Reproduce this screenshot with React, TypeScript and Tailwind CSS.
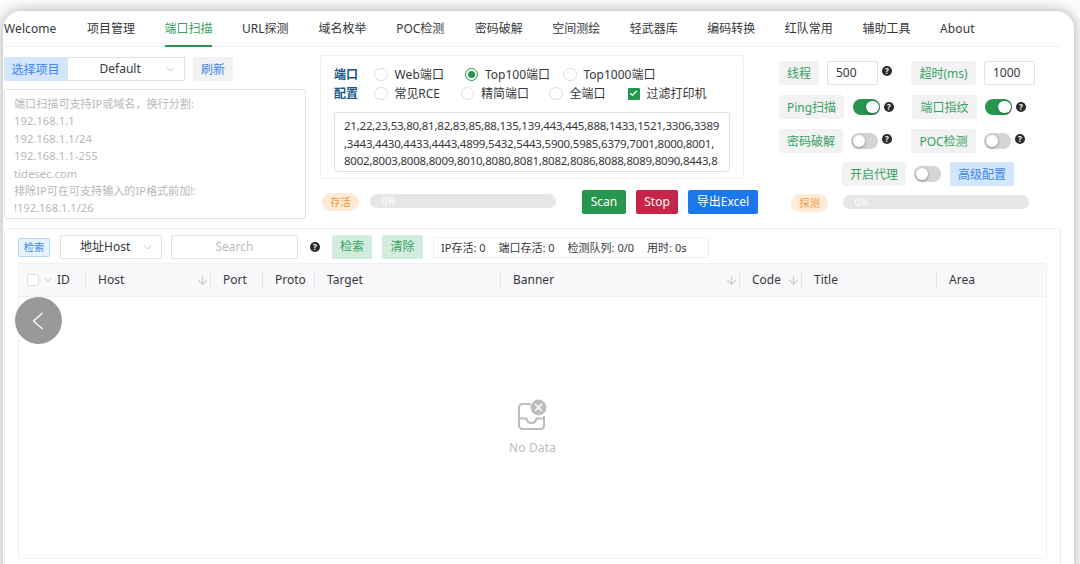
import type { ReactNode } from "react";
import clsx from "clsx";
import { ArrowDown, Check, ChevronDown } from "lucide-react";

const tabs = [
  { label: "Welcome", className: "w-[53px] tracking-[0.1px]" },
  { label: "项目管理", className: "w-[47.55px]" },
  { label: "端口扫描", className: "w-[47.55px]", active: true },
  { label: "URL探测", className: "w-[46.5px]" },
  { label: "域名枚举", className: "w-[47.55px]" },
  { label: "POC检测", className: "w-[48.5px]" },
  { label: "密码破解", className: "w-[47.55px]" },
  { label: "空间测绘", className: "w-[47.55px]" },
  { label: "轻武器库", className: "w-[47.55px]" },
  { label: "编码转换", className: "w-[47.55px]" },
  { label: "红队常用", className: "w-[47.55px]" },
  { label: "辅助工具", className: "w-[47.55px]" },
  { label: "About", className: "w-[36px] tracking-[0.15px]" },
];

const columns = [
  { label: "Host", className: "w-[125px]", sortable: true },
  { label: "Port", className: "w-[52px]" },
  { label: "Proto", className: "w-[52px]" },
  { label: "Target", className: "w-[186px]" },
  { label: "Banner", className: "w-[239px]", sortable: true },
  { label: "Code", className: "w-[62px]", sortable: true },
  { label: "Title", className: "w-[135px]" },
  { label: "Area", className: "flex-1", last: true },
];

const targetHint = [
  "端口扫描可支持IP或域名，换行分割:",
  "192.168.1.1",
  "192.168.1.1/24",
  "192.168.1.1-255",
  "tidesec.com",
  "排除IP可在可支持输入的IP格式前加!:",
  "!192.168.1.1/26",
];

const portLines = [
  "21,22,23,53,80,81,82,83,85,88,135,139,443,445,888,1433,1521,3306,3389",
  ",3443,4430,4433,4443,4899,5432,5443,5900,5985,6379,7001,8000,8001,",
  "8002,8003,8008,8009,8010,8080,8081,8082,8086,8088,8089,8090,8443,8",
];

function Help({ className }: { className?: string }) {
  return (
    <span
      className={clsx(
        "flex size-[10px] shrink-0 items-center justify-center rounded-full bg-[#2b2b2f] text-[8px] leading-none font-bold text-white",
        className,
      )}
    >
      ?
    </span>
  );
}

function Label({ className, children }: { className?: string; children: ReactNode }) {
  return (
    <span
      className={clsx(
        "flex h-[23.5px] shrink-0 items-center justify-center rounded-[2px] bg-[#f2f2f3] pt-px text-[#36a064]",
        className,
      )}
    >
      {children}
    </span>
  );
}

function Switch({ on, className }: { on?: boolean; className?: string }) {
  return (
    <span
      className={clsx(
        "flex h-[15.5px] w-[27px] shrink-0 items-center rounded-full px-[1.5px]",
        on ? "justify-end bg-[#27964f]" : "bg-[#d4d4d4]",
        className,
      )}
    >
      <span className="size-[12.5px] rounded-full bg-white shadow-[0_1px_3px_rgba(0,0,0,0.35)]" />
    </span>
  );
}

function Radio({ label, checked, className }: { label: string; checked?: boolean; className?: string }) {
  return (
    <span className={clsx("flex shrink-0 items-center gap-[7px]", className)}>
      <span
        className={clsx(
          "flex size-[13.5px] shrink-0 items-center justify-center rounded-full border",
          checked ? "border-[#27964f]" : "border-[#dedee2]",
        )}
      >
        {checked ? <span className="size-[7px] rounded-full bg-[#27964f]" /> : null}
      </span>
      {label}
    </span>
  );
}

function Pill({ children }: { children: ReactNode }) {
  return (
    <span className="flex h-[18px] w-[37px] shrink-0 items-center justify-center rounded-full bg-[#fdebd5] text-[10.3px] text-[#f0993f]">
      {children}
    </span>
  );
}

function Progress() {
  return (
    <span className="mb-[3px] flex h-[14px] w-[185.5px] items-center rounded-full bg-[#e6e6e6] pl-[11.5px] text-[10px] text-white">
      0%
    </span>
  );
}

function ProjectPane() {
  return (
    <div className="flex w-[302px] shrink-0 flex-col pt-[10px]">
      <div className="flex h-[24px]">
        <span className="flex w-[63px] items-center justify-center rounded-l-[2px] bg-[#d3e6fd] pt-px text-[#3a86ef]">
          选择项目
        </span>
        <span className="flex w-[118px] items-center border border-[#e0e0e6] pr-[7px] pl-[31.5px]">
          Default
          <ChevronDown className="ml-auto size-[13px] text-[#c2c2c8]" strokeWidth={1.8} />
        </span>
        <span className="ml-[8px] flex w-[40px] items-center justify-center rounded-[2px] bg-[#f2f2f3] pt-px text-[#3a86ef]">
          刷新
        </span>
      </div>
      <div className="mt-[8px] h-[130px] rounded-[3px] border border-[#e0e0e6] px-[9px] pt-[5px] text-[11.1px] leading-[17.4px] text-[#b8b8bc]">
        {targetHint.map((line, i) => (
          <div key={line} className={clsx("whitespace-nowrap", i > 0 && i < 5 && "tracking-[0.1px]")}>
            {line}
          </div>
        ))}
      </div>
    </div>
  );
}

function PortPane() {
  return (
    <div className="ml-[14px] flex w-[438px] shrink-0 flex-col pt-[8px]">
      <div className="h-[124px] w-[424px] rounded-[3px] border border-[#f0f0f3] pt-[9px] pl-[13px]">
        <div className="flex h-[19px] items-center">
          <span className="w-[40px] font-bold text-[#16588c]">端口</span>
          <Radio label="Web端口" className="w-[90.5px] tracking-[0.1px]" />
          <Radio label="Top100端口" checked className="w-[98.5px]" />
          <Radio label="Top1000端口" />
        </div>
        <div className="flex h-[19px] items-center">
          <span className="w-[40px] font-bold text-[#16588c]">配置</span>
          <Radio label="常见RCE" className="w-[86.5px] tracking-[-0.1px]" />
          <Radio label="精简端口" className="w-[88.5px]" />
          <Radio label="全端口" className="w-[78.5px]" />
          <span className="mr-[7px] flex size-[12px] items-center justify-center rounded-[1px] bg-[#27964f]">
            <Check className="size-[9px] text-white" strokeWidth={3} />
          </span>
          过滤打印机
        </div>
        <div className="mt-[9px] h-[60px] w-[396px] overflow-hidden rounded-[3px] border border-[#dedee4] pt-[4px] pl-[9px] text-[11.5px] leading-[17.7px] tracking-[-0.23px]">
          {portLines.map((line) => (
            <div key={line} className="whitespace-nowrap">
              {line}
            </div>
          ))}
        </div>
      </div>
      <div className="mt-[11px] flex h-[24px] items-center">
        <span className="ml-[2px] mr-[11px]">
          <Pill>存活</Pill>
        </span>
        <Progress />
        <div className="ml-auto flex h-full gap-[10px] text-white">
          <span className="flex w-[44px] items-center justify-center rounded-[2px] bg-[#27964f]">Scan</span>
          <span className="flex w-[42px] items-center justify-center rounded-[2px] bg-[#c82448]">Stop</span>
          <span className="flex w-[70px] items-center justify-center rounded-[2px] bg-[#1a78ec]">导出Excel</span>
        </div>
      </div>
    </div>
  );
}

function OptionsPane() {
  const input = "flex h-[24px] w-[51px] items-center rounded-[2px] border border-[#e0e0e6] pl-[8px]";

  return (
    <div className="ml-[21px] flex w-[281px] shrink-0 flex-col pt-[14px]">
      <div className="flex h-[24px] items-center">
        <Label className="w-[40px]">线程</Label>
        <span className={clsx(input, "ml-[8px]")}>500</span>
        <Help className="mb-[5px] ml-[4px]" />
        <Label className="ml-[19px] w-[65px]">超时(ms)</Label>
        <span className={clsx(input, "ml-[8px]")}>1000</span>
      </div>
      <div className="mt-[10px] flex h-[24px] items-center">
        <Label className="w-[65px]">Ping扫描</Label>
        <Switch on className="ml-[9px]" />
        <Help className="ml-[4px]" />
        <Label className="ml-[18px] w-[65px]">端口指纹</Label>
        <Switch on className="ml-[8px]" />
        <Help className="ml-[4px]" />
      </div>
      <div className="mt-[10px] flex h-[24px] items-center">
        <Label className="w-[64px]">密码破解</Label>
        <Switch className="ml-[8px]" />
        <Help className="mb-[5px] ml-[4px]" />
        <Label className="ml-[19px] w-[65px]">POC检测</Label>
        <Switch className="ml-[8px]" />
        <Help className="mb-[5px] ml-[4px]" />
      </div>
      <div className="mt-[9px] ml-[63px] flex h-[24px] items-center">
        <Label className="w-[64px]">开启代理</Label>
        <Switch className="ml-[8px]" />
        <span className="ml-[9px] flex h-full w-[64px] items-center justify-center rounded-[2px] bg-[#d3e6fd] pt-px text-[#3a86ef]">
          高级配置
        </span>
      </div>
      <div className="mt-[8px] ml-[12px] flex h-[18px] items-center gap-[15px]">
        <Pill>探测</Pill>
        <Progress />
      </div>
    </div>
  );
}

function EmptyIcon() {
  return (
    <svg className="mr-px h-[32px] w-[30px]" viewBox="0 0 30 32" fill="none" stroke="#bdbdbd" strokeWidth="2">
      <path d="M14 5H5.5A3.5 3.5 0 0 0 2 8.500V26.500A3.500 3.500 0 0 0 5.500 30H23.500A3.500 3.500 0 0 0 27 26.500V17" />
      <path d="M2 19.500H9.500C10 22.500 12 24 14.500 24S19 22.500 19.500 19.500H27" />
      <circle cx="21.500" cy="8.500" r="7.900" fill="#bdbdbd" stroke="none" />
      <path d="M18 5L25 12M25 5L18 12" stroke="#fff" strokeWidth="1.500" />
    </svg>
  );
}

function ResultTable() {
  return (
    <div className="mx-[13px] mt-[4px] flex h-[296px] flex-col rounded-[3px] border border-[#efeff4]">
      <div className="flex h-[33px] items-center border-b border-[#efeff4] bg-[#f9f9fb]">
        <div className="flex w-[66px] items-center pl-[8px]">
          <span className="size-[12px] rounded-[2px] border border-[#dedee3] bg-white" />
          <ChevronDown className="mr-[3px] ml-[3px] size-[12px] text-[#c2c2c8]" />
          <span>ID</span>
        </div>
        <span className="h-[16px] w-px bg-[#e3e3e9]" />
        {columns.map((column) => (
          <div key={column.label} className={clsx("flex shrink-0 items-center pl-[12px]", column.className)}>
            {column.label}
            {column.sortable ? <ArrowDown className="mr-px ml-auto size-[13px] text-[#c8c8cd]" /> : null}
            {column.last ? null : (
              <span className={clsx("h-[16px] w-px bg-[#e3e3e9]", column.sortable ? "" : "ml-auto")} />
            )}
          </div>
        ))}
      </div>
      <div className="flex flex-1 flex-col items-center pt-[102px] text-[#bdbdbd]">
        <EmptyIcon />
        <span className="mt-[8px] tracking-[0.15px]">No Data</span>
      </div>
    </div>
  );
}

function ResultPane() {
  return (
    <div className="flex h-[346px] w-[1057px] flex-col rounded-t-[3px] border border-b-0 border-[#f0f0f3] pt-[6px]">
      <div className="flex h-[24px] items-center pl-[13px]">
        <span className="flex h-[19px] w-[32px] items-center justify-center rounded-[2px] border border-[#b9d6fb] bg-[#e6f1fe] text-[10.3px] text-[#3a86ef]">
          检索
        </span>
        <span className="ml-[10px] flex h-full w-[102px] items-center rounded-[2px] border border-[#e0e0e6] pr-[7px] pl-[19px]">
          地址Host
          <ChevronDown className="ml-auto size-[13px] text-[#c2c2c8]" strokeWidth={1.8} />
        </span>
        <span className="ml-[9px] flex h-full w-[127px] items-center justify-center rounded-[2px] border border-[#e0e0e6] text-[#bcbcc0]">
          Search
        </span>
        <Help className="ml-[12px]" />
        <span className="ml-[12px] flex h-full w-[40px] items-center justify-center rounded-[2px] bg-[#d4ecdd] text-[#36a064]">
          检索
        </span>
        <span className="ml-[10px] flex h-full w-[41px] items-center justify-center rounded-[2px] bg-[#d4ecdd] text-[#36a064]">
          清除
        </span>
        <div className="ml-[10px] flex h-[21px] w-[276px] items-center gap-[13px] rounded-[3px] border border-[#f0f0f3] pt-px pl-[7px] text-[11px] whitespace-nowrap">
          <span>IP存活: 0</span>
          <span>端口存活: 0</span>
          <span>检测队列: 0/0</span>
          <span>用时: 0s</span>
        </div>
      </div>
      <ResultTable />
    </div>
  );
}

export default function App() {
  return (
    <div className="h-[564px] w-[1080px] overflow-hidden bg-[#fbfbfb] pt-[11px] pr-[6px] pl-[3px] font-['Noto_Sans','Noto_Sans_CJK_SC',sans-serif] text-[12px] leading-[18px] text-[#37373b]">
      <div className="relative h-[570px] rounded-[18px] bg-white pl-px shadow-[0_0_13px_rgba(0,0,0,0.32)]">
        <nav className="flex h-[36px] w-[1057px] gap-[30px] border-b border-[#efeff3]">
          {tabs.map((tab) => (
            <span
              key={tab.label}
              className={clsx(
                "-mb-px flex h-[36px] shrink-0 items-center border-b-2 pt-[2px] whitespace-nowrap",
                tab.active ? "border-[#27964f] text-[#36a064]" : "border-transparent",
                tab.className,
              )}
            >
              {tab.label}
            </span>
          ))}
        </nav>
        <div className="flex h-[181px]">
          <ProjectPane />
          <PortPane />
          <OptionsPane />
        </div>
        <ResultPane />
        <button
          type="button"
          aria-label="Back"
          className="absolute top-[286px] left-[12px] flex size-[47px] items-center justify-center rounded-full bg-[#999999]"
        >
          <svg className="mr-[2px] h-[18px] w-[12px]" viewBox="0 0 12 18" fill="none" stroke="#fff" strokeWidth="1.300">
            <path d="M10.500 1L1.500 9L10.500 17" />
          </svg>
        </button>
      </div>
    </div>
  );
}
